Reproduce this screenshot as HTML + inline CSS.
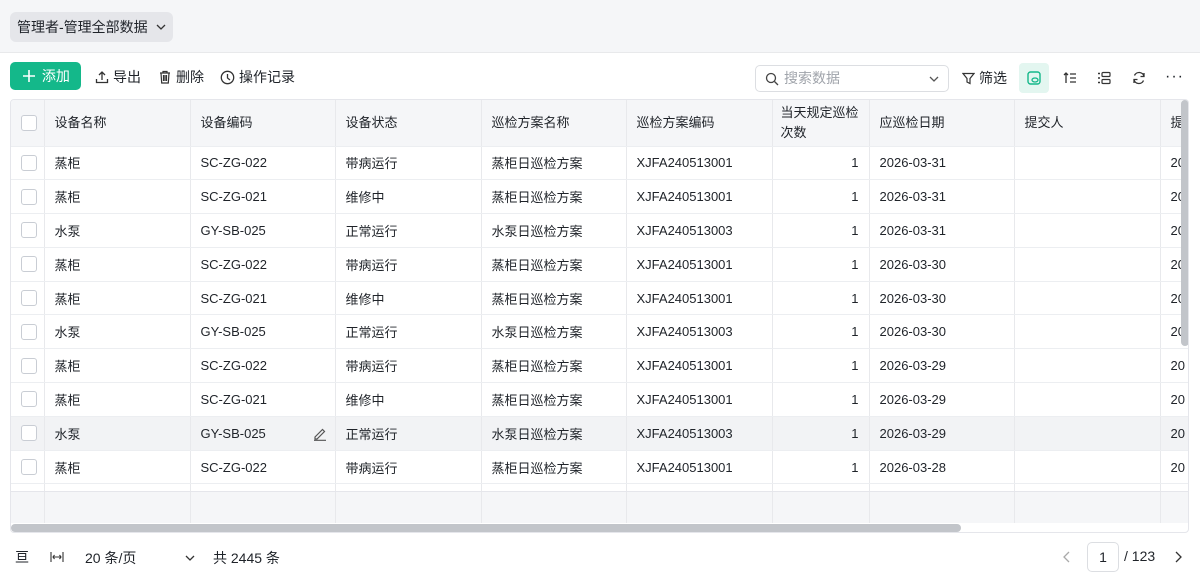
<!DOCTYPE html>
<html><head><meta charset="utf-8"><style>
*{box-sizing:border-box;margin:0;padding:0}
body{width:1200px;height:581px;background:#fff;font-family:"Liberation Sans","Noto Sans CJK SC",sans-serif;font-size:13px;color:#1f2329;position:relative;overflow:hidden}
.top{position:absolute;left:0;top:0;width:1200px;height:53px;background:#f5f6f8;border-bottom:1px solid #e8e9eb}
.view{position:absolute;left:10px;top:12px;height:30px;width:163px;background:#e5e6ea;border-radius:6px;font-size:14px;line-height:30px;padding-left:7px;color:#1f2329}
.add{position:absolute;left:10px;top:62px;width:71px;height:28px;background:#14b88a;border-radius:5px;color:#fff;font-size:14px;line-height:28px;padding-left:13px}
.tb{position:absolute;top:62px;height:30px;line-height:30px;font-size:14px;color:#1f2329;display:flex;align-items:center;gap:4px}
.search{position:absolute;left:755px;top:65px;width:194px;height:27px;border:1px solid #dcdee2;border-radius:5px;color:#a0a4ab;font-size:14px;line-height:25px;padding-left:28px}
.grid{position:absolute;left:10px;top:99px;width:1179px;height:434px;border:1px solid #e5e6eb;border-radius:4px;overflow:hidden}
table{border-collapse:collapse;table-layout:fixed;position:absolute;left:0;top:0;width:1189px}
td,th{border-right:1px solid #e8e9ec;border-bottom:1px solid #eceef1;height:33.8px;padding:0 10px;white-space:nowrap;overflow:hidden;font-weight:normal;text-align:left}
th{height:46px;background:#f5f6f8;line-height:20px;white-space:normal}
th.n{padding:0 8px}
tr.h td{background:#f2f3f5}
.cb{width:16px;height:16px;border:1px solid #c9cdd4;border-radius:3px;background:#fff;margin-left:0}
.num{text-align:right}
</style></head><body>
<div class="top"><div class="view">管理者-管理全部数据 <svg width="12" height="12" viewBox="0 0 12 12" style="vertical-align:-1px;margin-left:3px"><path d="M2 4l4 4 4-4" fill="none" stroke="#333" stroke-width="1.3"/></svg></div></div>
<div class="add"><svg width="12" height="12" viewBox="0 0 12 12" style="vertical-align:-1px;margin-right:3px"><path d="M6 0v12M0 6h12" stroke="#fff" stroke-width="1.6"/></svg> 添加</div>
<div class="tb" style="left:95px"><svg width="14" height="14" viewBox="0 0 14 14"><path d="M7 10V2M4 5l3-3 3 3M1.5 9v3.5h11V9" fill="none" stroke="#333" stroke-width="1.3"/></svg>导出</div>
<div class="tb" style="left:158px"><svg width="14" height="14" viewBox="0 0 14 14"><path d="M2 3h10M5 3V1.5h4V3M3 3l.7 10h6.6L11 3M5.5 5v6M7 5v6M8.5 5v6" fill="none" stroke="#333" stroke-width="1.2"/></svg>删除</div>
<div class="tb" style="left:220px"><svg width="15" height="15" viewBox="0 0 15 15"><circle cx="7.5" cy="7.5" r="6.2" fill="none" stroke="#333" stroke-width="1.3"/><path d="M7.5 4v4l2.5 2" fill="none" stroke="#333" stroke-width="1.3"/></svg>操作记录</div>
<div class="search"><svg width="14" height="14" viewBox="0 0 14 14" style="position:absolute;left:9px;top:6px"><circle cx="6" cy="6" r="4.5" fill="none" stroke="#444" stroke-width="1.3"/><path d="M9.5 9.5L13 13" stroke="#444" stroke-width="1.3"/></svg>搜索数据<svg width="12" height="12" viewBox="0 0 12 12" style="position:absolute;right:8px;top:7px"><path d="M2 4l4 4 4-4" fill="none" stroke="#555" stroke-width="1.3"/></svg></div>
<div class="tb" style="left:962px;top:63px"><svg width="13" height="13" viewBox="0 0 13 13"><path d="M1 1.5h11L8 6.5v5l-3-1.5V6.5z" fill="none" stroke="#333" stroke-width="1.2"/></svg>筛选</div>
<div style="position:absolute;left:1019px;top:63px;width:30px;height:30px;background:#e3f6f0;border-radius:4px"><svg width="14" height="14" viewBox="0 0 14 14" style="position:absolute;left:8px;top:8px"><rect x="1" y="1" width="12" height="12" rx="2.5" fill="none" stroke="#14b88a" stroke-width="1.4"/><ellipse cx="8" cy="9" rx="3" ry="2" fill="none" stroke="#14b88a" stroke-width="1.3"/></svg></div>
<svg width="14" height="14" viewBox="0 0 14 14" style="position:absolute;left:1063px;top:71px"><path d="M3 12V2M1 4l2-2 2 2M7 3h6M7 7h6M7 11h6" fill="none" stroke="#333" stroke-width="1.3"/></svg>
<svg width="14" height="14" viewBox="0 0 14 14" style="position:absolute;left:1097px;top:71px"><path d="M1 2.5h2M1 7h2M1 11.5h2" stroke="#333" stroke-width="1.6"/><rect x="5" y="1.5" width="8" height="4" rx="1" fill="none" stroke="#333" stroke-width="1.2"/><rect x="5" y="8.5" width="8" height="4" rx="1" fill="none" stroke="#333" stroke-width="1.2"/></svg>
<svg width="14" height="14" viewBox="0 0 14 14" style="position:absolute;left:1132px;top:71px"><path d="M12 5.5A5 5 0 0 0 2.5 4.5M2 8.5a5 5 0 0 0 9.5 1M12 2v3.5H8.5M2 12V8.5h3.5" fill="none" stroke="#333" stroke-width="1.3"/></svg>
<div style="position:absolute;left:1165px;top:68px;font-size:16px;letter-spacing:1px">···</div>
<div class="grid">
<table>
<colgroup><col width="33"><col width="146"><col width="145"><col width="146"><col width="145"><col width="146"><col width="97"><col width="145"><col width="146"><col width="40"></colgroup>
<tr><th><div class="cb"></div></th><th>设备名称</th><th>设备编码</th><th>设备状态</th><th>巡检方案名称</th><th>巡检方案编码</th><th class="n">当天规定巡检次数</th><th>应巡检日期</th><th>提交人</th><th>提</th></tr>
<tr><td><div class="cb"></div></td><td>蒸柜</td><td>SC-ZG-022</td><td>带病运行</td><td>蒸柜日巡检方案</td><td>XJFA240513001</td><td class="num">1</td><td>2026-03-31</td><td></td><td>20</td></tr>
<tr><td><div class="cb"></div></td><td>蒸柜</td><td>SC-ZG-021</td><td>维修中</td><td>蒸柜日巡检方案</td><td>XJFA240513001</td><td class="num">1</td><td>2026-03-31</td><td></td><td>20</td></tr>
<tr><td><div class="cb"></div></td><td>水泵</td><td>GY-SB-025</td><td>正常运行</td><td>水泵日巡检方案</td><td>XJFA240513003</td><td class="num">1</td><td>2026-03-31</td><td></td><td>20</td></tr>
<tr><td><div class="cb"></div></td><td>蒸柜</td><td>SC-ZG-022</td><td>带病运行</td><td>蒸柜日巡检方案</td><td>XJFA240513001</td><td class="num">1</td><td>2026-03-30</td><td></td><td>20</td></tr>
<tr><td><div class="cb"></div></td><td>蒸柜</td><td>SC-ZG-021</td><td>维修中</td><td>蒸柜日巡检方案</td><td>XJFA240513001</td><td class="num">1</td><td>2026-03-30</td><td></td><td>20</td></tr>
<tr><td><div class="cb"></div></td><td>水泵</td><td>GY-SB-025</td><td>正常运行</td><td>水泵日巡检方案</td><td>XJFA240513003</td><td class="num">1</td><td>2026-03-30</td><td></td><td>20</td></tr>
<tr><td><div class="cb"></div></td><td>蒸柜</td><td>SC-ZG-022</td><td>带病运行</td><td>蒸柜日巡检方案</td><td>XJFA240513001</td><td class="num">1</td><td>2026-03-29</td><td></td><td>20</td></tr>
<tr><td><div class="cb"></div></td><td>蒸柜</td><td>SC-ZG-021</td><td>维修中</td><td>蒸柜日巡检方案</td><td>XJFA240513001</td><td class="num">1</td><td>2026-03-29</td><td></td><td>20</td></tr>
<tr class="h"><td><div class="cb"></div></td><td>水泵</td><td style="position:relative">GY-SB-025<svg width="14" height="14" viewBox="0 0 14 14" style="position:absolute;right:8px;top:10px"><path d="M2 10l7.5-7.5 2 2L4 12H2zM1 13.3h12" fill="none" stroke="#555" stroke-width="1.2"/></svg></td><td>正常运行</td><td>水泵日巡检方案</td><td>XJFA240513003</td><td class="num">1</td><td>2026-03-29</td><td></td><td>20</td></tr>
<tr><td><div class="cb"></div></td><td>蒸柜</td><td>SC-ZG-022</td><td>带病运行</td><td>蒸柜日巡检方案</td><td>XJFA240513001</td><td class="num">1</td><td>2026-03-28</td><td></td><td>20</td></tr>
<tr><td></td><td></td><td></td><td></td><td></td><td></td><td></td><td></td><td></td><td></td></tr>
</table>
<div style="position:absolute;left:0;top:391px;width:1179px;height:32px;background:#f5f6f8;border-top:1px solid #e5e6eb;display:flex">
<div style="width:34px;border-right:1px solid #e8e9ec"></div><div style="width:146px;border-right:1px solid #e8e9ec"></div><div style="width:145px;border-right:1px solid #e8e9ec"></div><div style="width:146px;border-right:1px solid #e8e9ec"></div><div style="width:145px;border-right:1px solid #e8e9ec"></div><div style="width:146px;border-right:1px solid #e8e9ec"></div><div style="width:97px;border-right:1px solid #e8e9ec"></div><div style="width:145px;border-right:1px solid #e8e9ec"></div><div style="width:146px;border-right:1px solid #e8e9ec"></div></div>
<div style="position:absolute;left:0;top:424px;width:950px;height:8px;background:#c2c5ca;border-radius:4px"></div>
<div style="position:absolute;left:1170px;top:0;width:8px;height:246px;background:#c2c5ca;border-radius:4px"></div>
</div>
<div style="position:absolute;left:15px;top:547px;font-size:14px">亘</div>
<svg width="14" height="12" viewBox="0 0 14 12" style="position:absolute;left:50px;top:551px"><path d="M1 1v10M13 1v10M3 6h8M4.5 4l-1.5 2 1.5 2M9.5 4l1.5 2-1.5 2" fill="none" stroke="#333" stroke-width="1.1"/></svg>
<div style="position:absolute;left:85px;top:548px;font-size:14px">20 条/页</div>
<svg width="12" height="12" viewBox="0 0 12 12" style="position:absolute;left:184px;top:552px"><path d="M2 4l4 4 4-4" fill="none" stroke="#333" stroke-width="1.3"/></svg>
<div style="position:absolute;left:213px;top:548px;font-size:14px">共 2445 条</div>
<svg width="10" height="12" viewBox="0 0 10 12" style="position:absolute;left:1062px;top:551px"><path d="M7 1L2 6l5 5" fill="none" stroke="#aaa" stroke-width="1.3"/></svg>
<div style="position:absolute;left:1087px;top:542px;width:32px;height:30px;border:1px solid #dcdee2;border-radius:5px;text-align:center;line-height:28px;font-size:14px">1</div>
<div style="position:absolute;left:1124px;top:548px;font-size:14px">/ 123</div>
<svg width="10" height="12" viewBox="0 0 10 12" style="position:absolute;left:1173px;top:551px"><path d="M3 1l5 5-5 5" fill="none" stroke="#333" stroke-width="1.3"/></svg>
</body></html>
